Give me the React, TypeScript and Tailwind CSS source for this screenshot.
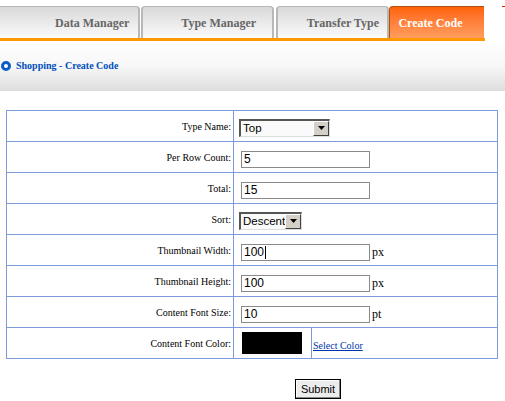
import React from "react";

const serif = "font-['Liberation_Serif','Times_New_Roman',serif]";
const sans = "font-['Liberation_Sans',Arial,sans-serif]";

function FakeSelect({ value, width }: { value: string; width: string }) {
  return (
    <div
      className={`inline-flex h-[18px] ${width} items-stretch border-t-2 border-l-2 border-b border-r border-t-[#555] border-l-[#555] border-b-[#ddd] border-r-[#ddd] bg-[#fafafa] align-middle`}
    >
      <span className={`flex-1 overflow-hidden whitespace-nowrap pl-[2px] text-[11.5px] leading-[15px] text-black ${sans}`}>
        {value}
      </span>
      <span className="flex w-[16px] shrink-0 items-center justify-center border border-t-white border-l-white border-b-[#404040] border-r-[#404040] bg-[#d4d0c8]">
        <svg width="7" height="4" viewBox="0 0 7 4">
          <path d="M0 0h7L3.5 4z" fill="#000" />
        </svg>
      </span>
    </div>
  );
}

function TextBox({ value, caret }: { value: string; caret?: boolean }) {
  return (
    <span
      className={`inline-flex h-[17px] w-[129px] items-center border border-[#8a8a8a] bg-white pl-[2px] text-[12px] leading-[15px] text-black align-baseline ${sans}`}
    >
      {value}
      {caret && <span className="ml-[1px] inline-block h-[13px] w-px bg-black" />}
    </span>
  );
}

function Unit({ children }: { children: string }) {
  return <span className={`ml-[2px] text-[12px] text-black ${serif}`}>{children}</span>;
}

const rows: { label: string; field: React.ReactNode; pad?: string }[] = [
  { label: "Type Name:", field: <FakeSelect value="Top" width="w-[91px]" />, pad: "pl-[5px]" },
  { label: "Per Row Count:", field: <TextBox value="5" /> },
  { label: "Total:", field: <TextBox value="15" /> },
  { label: "Sort:", field: <FakeSelect value="Descent" width="w-[63px]" />, pad: "pl-[5px]" },
  {
    label: "Thumbnail Width:",
    field: (
      <>
        <TextBox value="100" caret />
        <Unit>px</Unit>
      </>
    ),
  },
  {
    label: "Thumbnail Height:",
    field: (
      <>
        <TextBox value="100" />
        <Unit>px</Unit>
      </>
    ),
  },
  {
    label: "Content Font Size:",
    field: (
      <>
        <TextBox value="10" />
        <Unit>pt</Unit>
      </>
    ),
  },
];

export default function App() {
  const cell = "border border-[#7b9bd9]";
  const label = `${cell} w-[227px] pr-[2px] text-right text-[10px] text-black ${serif}`;
  return (
    <div className="relative h-[401px] w-[505px] overflow-hidden bg-white">
      {/* tabs */}
      <div className="flex h-[38px] items-end pt-[6px]">
        <div className="flex h-[32px] w-[141px] items-end justify-end rounded-tr-[4px] border-t border-r-2 border-[#b8b8b8] bg-gradient-to-b from-[#d9d9d9] to-[#fbfbfb] pb-[6px] pr-[9px]">
          <span className={`text-[12px] font-bold text-[#666] ${serif}`}>Data Manager</span>
        </div>
        <div className="ml-px flex h-[32px] w-[133px] items-end rounded-t-[4px] border-x-2 border-t border-[#b8b8b8] bg-gradient-to-b from-[#d9d9d9] to-[#fbfbfb] pb-[6px] pl-[38px]">
          <span className={`text-[12px] font-bold text-[#666] ${serif}`}>Type Manager</span>
        </div>
        <div className="ml-[2px] flex h-[32px] w-[114px] items-end rounded-t-[4px] border-x-2 border-t border-[#b8b8b8] bg-gradient-to-b from-[#d9d9d9] to-[#fbfbfb] pb-[6px] pl-[29px]">
          <span className={`text-[12px] font-bold text-[#666] ${serif}`}>Transfer Type</span>
        </div>
        <div className="flex h-[32px] w-[95px] items-end rounded-tl-[4px] border-t border-l border-[#b3500f] bg-gradient-to-b from-[#ff6200] to-[#ff9d5c] pb-[6px] pl-[8px]">
          <span className={`text-[12px] font-bold text-white ${serif}`}>Create Code</span>
        </div>
        <span className="ml-[18px] mb-[31px] h-px w-[3px] self-end bg-[#d02000]" />
      </div>
      <div className="h-[3px] w-[485px] bg-[#ff9900]" />

      {/* sub header */}
      <div className="flex h-[50px] items-center bg-gradient-to-b from-white via-[#f7f7f7] to-[#dedede] pb-[1px] pl-[1px]">
        <span className="h-[10px] w-[10px] rounded-full border-[3px] border-[#0a5cc8] bg-white" />
        <span className={`ml-[5px] text-[10px] font-bold text-[#0050c0] ${serif}`}>Shopping - Create Code</span>
      </div>

      {/* form */}
      <table className="ml-[6px] mt-[19px] w-[492px] border-collapse">
        <tbody>
          {rows.map((r) => (
            <tr key={r.label} className="h-[31px]">
              <td className={label}>{r.label}</td>
              <td colSpan={2} className={`${cell} ${r.pad ?? "pl-[7px]"} whitespace-nowrap`}>
                {r.field}
              </td>
            </tr>
          ))}
          <tr className="h-[31px]">
            <td className={label}>Content Font Color:</td>
            <td className={`${cell} w-[78px] pl-[8px]`}>
              <div className="h-[22px] w-[60px] bg-black" />
            </td>
            <td className={`${cell} pl-[1px]`}>
              <a href="#" className={`text-[10px] text-[#0033aa] underline ${serif}`}>
                Select Color
              </a>
            </td>
          </tr>
        </tbody>
      </table>

      <div className="mt-[16px] pl-[295px]">
        <button
          className={`h-[20px] w-[46px] border border-black bg-[#ececec] text-[11px] text-black shadow-[inset_-1px_-1px_0_#888,inset_1px_1px_0_#fff] ${sans}`}
        >
          Submit
        </button>
      </div>
    </div>
  );
}
